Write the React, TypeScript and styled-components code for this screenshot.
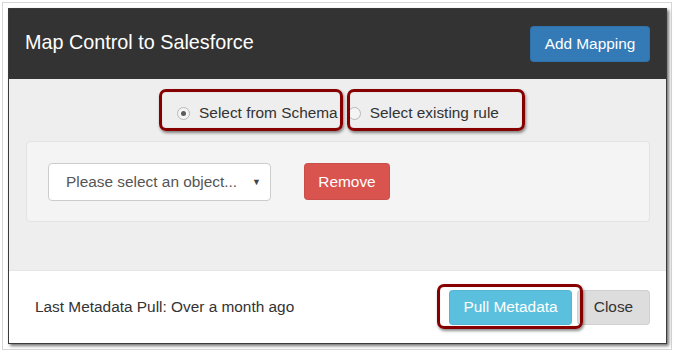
import styled, { createGlobalStyle } from "styled-components"

const Global = createGlobalStyle`
    html, body {
        margin: 0;
        padding: 0;
        background: #ffffff;
    }
    body {
        font-family: "Liberation Sans", Arial, sans-serif;
    }
`

const Frame = styled.div`
    width: 674px;
    height: 352px;
    box-sizing: border-box;
    padding: 8px 7px 8px 8px;
    position: relative;
    &::before {
        content: "";
        position: absolute;
        left: 2px;
        top: 2px;
        right: 2px;
        bottom: 2px;
        border: 1px solid #d6d6d6;
        pointer-events: none;
    }
`

const Modal = styled.div`
    position: relative;
    width: 659px;
    height: 336px;
    box-sizing: border-box;
    border: 1px solid #3a3a3a;
    box-shadow: 2px 2px 3px rgba(0, 0, 0, 0.55);
    display: flex;
    flex-direction: column;
    background: #fff;
`

const Header = styled.div`
    height: 70px;
    flex: none;
    background: #333333;
    display: flex;
    align-items: center;
    justify-content: space-between;
    padding: 0 16px 0 16px;
`

const Title = styled.h4`
    margin: 0;
    margin-top: -4px;
    color: #fff;
    font-size: 19.8px;
    font-weight: normal;
`

const Btn = styled.button<{ $bg: string; $fg?: string; $w: number; $h: number }>`
    width: ${p => p.$w}px;
    height: ${p => p.$h}px;
    background: ${p => p.$bg};
    color: ${p => p.$fg || "#fff"};
    border: 1px solid rgba(0, 0, 0, 0.06);
    border-radius: 4px;
    font-family: "Liberation Sans", Arial, sans-serif;
    font-size: 15.4px;
    padding: 0;
    cursor: pointer;
`

const Body = styled.div`
    flex: 1;
    background: #eeeeee;
    padding: 20px 16px 0 17px;
    border-bottom: 1px solid #e5e5e5;
`

const RadioRow = styled.div`
    display: flex;
    justify-content: center;
    gap: 10px;
    height: 28px;
    align-items: center;
    padding-left: 0;
`

const RadioLabel = styled.label`
    display: flex;
    align-items: center;
    gap: 9px;
    font-size: 15.4px;
    color: #333;
`

const RadioDot = styled.span<{ $on?: boolean }>`
    width: 11px;
    height: 11px;
    border-radius: 50%;
    border: 1px solid #b8b8b8;
    background: #f4f4f4;
    display: inline-flex;
    align-items: center;
    justify-content: center;
    &::after {
        content: "";
        width: 5px;
        height: 5px;
        border-radius: 50%;
        background: #5c5c5c;
        display: ${p => (p.$on ? "block" : "none")};
    }
`

const Well = styled.div`
    margin-top: 14px;
    height: 81px;
    box-sizing: border-box;
    background: #f4f4f4;
    border: 1px solid #e3e3e3;
    border-radius: 4px;
    display: flex;
    align-items: center;
    padding: 0 0 0 21px;
    gap: 33px;
`

const Select = styled.div`
    width: 223px;
    height: 38px;
    box-sizing: border-box;
    background: #fff;
    border: 1px solid #cccccc;
    border-radius: 4px;
    display: flex;
    align-items: center;
    justify-content: space-between;
    padding: 0 9px 0 17px;
    color: #555;
    font-size: 15.4px;
`

const Caret = styled.span`
    font-size: 9px;
    color: #444;
`

const Footer = styled.div`
    height: 72px;
    flex: none;
    display: flex;
    align-items: center;
    justify-content: space-between;
    padding: 0 16px 0 26px;
`

const FooterText = styled.span`
    font-size: 15.4px;
    color: #333;
`

const FooterButtons = styled.div`
    display: flex;
    gap: 5px;
`

const Callout = styled.div<{ $x: number; $y: number; $w: number; $h: number }>`
    position: absolute;
    left: ${p => p.$x}px;
    top: ${p => p.$y}px;
    width: ${p => p.$w}px;
    height: ${p => p.$h}px;
    box-sizing: border-box;
    border: 3px solid #870000;
    border-radius: 7px;
    box-shadow: 1px 2px 3px rgba(0, 0, 0, 0.45), inset 0 0 1px rgba(0, 0, 0, 0.3);
    pointer-events: none;
`

const App = () => {
    return (
        <>
            <Global />
            <Frame>
                <Modal>
                    <Header>
                        <Title>Map Control to Salesforce</Title>
                        <Btn $bg="#337ab7" $w={120} $h={36}>Add Mapping</Btn>
                    </Header>
                    <Body>
                        <RadioRow>
                            <RadioLabel><RadioDot $on />Select from Schema</RadioLabel>
                            <RadioLabel><RadioDot />Select existing rule</RadioLabel>
                        </RadioRow>
                        <Well>
                            <Select>
                                Please select an object...
                                <Caret>▼</Caret>
                            </Select>
                            <Btn $bg="#d9534f" $w={86} $h={37}>Remove</Btn>
                        </Well>
                    </Body>
                    <Footer>
                        <FooterText>Last Metadata Pull: Over a month ago</FooterText>
                        <FooterButtons>
                            <Btn $bg="#5bc0de" $w={123} $h={35}>Pull Metadata</Btn>
                            <Btn $bg="#dddddd" $fg="#333" $w={73} $h={35}>Close</Btn>
                        </FooterButtons>
                    </Footer>
                    <Callout $x={150} $y={80} $w={184} $h={42} />
                    <Callout $x={338} $y={80} $w={178} $h={42} />
                    <Callout $x={428} $y={275} $w={146} $h={45} />
                </Modal>
            </Frame>
        </>
    )
}

export default App
